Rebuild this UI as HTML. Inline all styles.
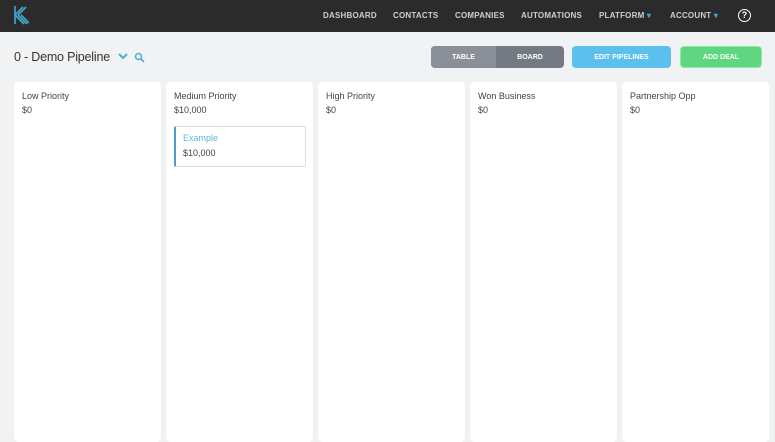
<!DOCTYPE html>
<html><head><style>
*{margin:0;padding:0;box-sizing:border-box}
body{width:775px;height:428px;overflow:hidden;background:#f1f2f4;font-family:"Liberation Sans",sans-serif;position:relative}
.nav{position:absolute;left:0;top:0;width:775px;height:32px;background:#2b2b2b}
.nav a{position:absolute;top:11px;color:#cfcfcf;font-size:8px;font-weight:bold;letter-spacing:.2px}
.title{position:absolute;left:14px;top:50px;font-size:12.5px;color:#333;letter-spacing:-.2px}
.btn{position:absolute;top:46px;height:22px;color:#fff;font-size:7px;font-weight:bold;text-align:center;line-height:24px;border-radius:4px}
.btn span{line-height:24px}
.col{position:absolute;top:82px;width:147px;height:360px;background:#fff;border-radius:4px}
.col .n{position:absolute;left:8px;top:9px;font-size:9px;color:#444}
.col .v{position:absolute;left:8px;top:23px;font-size:9px;color:#444}
</style></head><body>
<div class="nav">
<svg style="position:absolute;left:13px;top:5px" width="16" height="20" viewBox="0 0 16 20"><g stroke="#3fa9d0" stroke-width="1.6" fill="none"><path d="M2 1V19"/><path d="M2 10L10 2"/><path d="M5 10L13 2"/><path d="M2 10L11 19"/><path d="M5 10L14 19"/><path d="M8 10L16 18"/></g></svg>
<a style="left:323px">DASHBOARD</a><a style="left:393px">CONTACTS</a><a style="left:455px">COMPANIES</a><a style="left:521px">AUTOMATIONS</a><a style="left:599px">PLATFORM <span style="color:#3fa9d0">▾</span></a><a style="left:670px">ACCOUNT <span style="color:#3fa9d0">▾</span></a>
<div style="position:absolute;left:738px;top:9px;width:13px;height:13px;border:1.5px solid #fff;border-radius:50%;color:#fff;font-size:9px;font-weight:bold;text-align:center;line-height:10px">?</div>
</div>
<div class="title">0 - Demo Pipeline</div>
<svg style="position:absolute;left:118px;top:53px" width="10" height="8"><path d="M1 1L5 5L9 1" stroke="#4aaed6" stroke-width="2" fill="none"/></svg>
<svg style="position:absolute;left:134px;top:52px" width="11" height="11"><circle cx="4.5" cy="4.5" r="3" stroke="#4aaed6" stroke-width="1.5" fill="none"/><path d="M7 7L10 10" stroke="#4aaed6" stroke-width="1.6"/></svg>
<div class="btn" style="left:431px;width:133px;background:#747a82"><span style="position:absolute;left:0;top:0;width:65px;height:22px;background:#8b9098;border-radius:4px 0 0 4px">TABLE</span><span style="position:absolute;left:65px;top:0;width:68px;height:22px">BOARD</span></div>
<div class="btn" style="left:572px;width:99px;background:#5bc0ee">EDIT PIPELINES</div>
<div class="btn" style="left:680px;width:82px;background:#5fd680;border:1.5px solid #8fe8a6;line-height:21px">ADD DEAL</div>
<div class="col" style="left:14px"><div class="n">Low Priority</div><div class="v">$0</div></div>
<div class="col" style="left:166px"><div class="n">Medium Priority</div><div class="v">$10,000</div>
<div style="position:absolute;left:8px;top:44px;width:132px;height:41px;border:1px solid #ddd;border-left:2px solid #4a9fc2;border-radius:2px"><div style="position:absolute;left:7px;top:6px;font-size:9px;color:#5bb8d8">Example</div><div style="position:absolute;left:7px;top:21px;font-size:9px;color:#444">$10,000</div></div></div>
<div class="col" style="left:318px"><div class="n">High Priority</div><div class="v">$0</div></div>
<div class="col" style="left:470px"><div class="n">Won Business</div><div class="v">$0</div></div>
<div class="col" style="left:622px"><div class="n">Partnership Opp</div><div class="v">$0</div></div>
</body></html>
